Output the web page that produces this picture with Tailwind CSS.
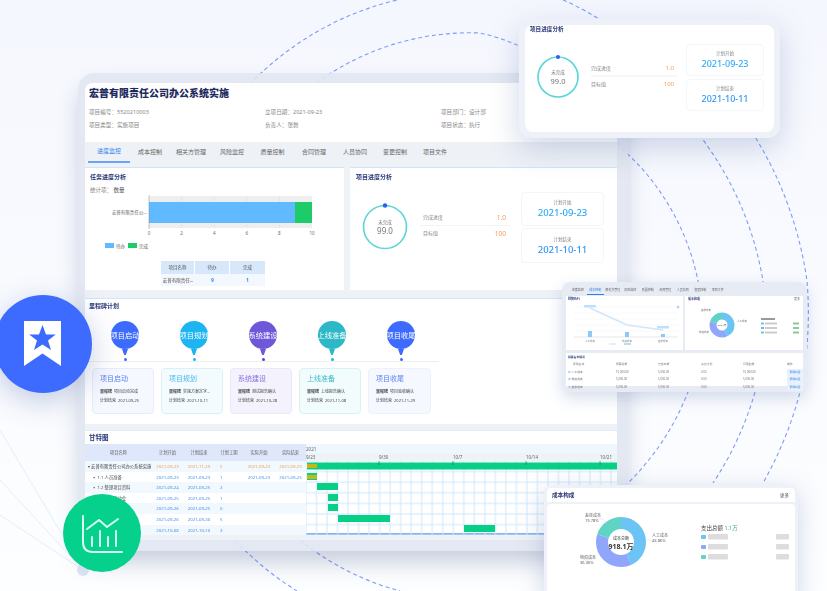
<!DOCTYPE html>
<html lang="zh-CN">
<head>
    <meta charset="UTF-8">
    <title>项目管理</title>
    <script src="https://cdn.jsdelivr.net/npm/@tailwindcss/browser@4"></script>
</head>
<body class="bg-white">
<div class="relative w-[827px] h-[591px] overflow-hidden bg-linear-to-b from-[#f5f7fe] to-[#fdfeff] font-['Noto_Sans','Noto_Sans_CJK_SC',sans-serif]">

    <!-- background rings -->
    <svg class="absolute inset-0" width="827" height="591" fill="none">
        <g stroke="#7d9cf7" stroke-width="1.100" stroke-dasharray="4 3">
            <path d="M300 96A260 260 0 0 1 480 33A200 200 0 0 1 620 147A240 240 0 0 1 698 281A270 270 0 0 1 688 392A260 260 0 0 1 630 481A270 270 0 0 1 540 530"/>
            <path d="M300 540A270 270 0 0 0 400 591"/>
            <path d="M240 95A300 300 0 0 1 397 0"/>
            <path d="M563 0A260 260 0 0 1 697 132A328 328 0 0 1 763 281A328 328 0 0 1 755 392A328 328 0 0 1 713 483"/>
            <path d="M235 540A300 300 0 0 0 297 591"/>
            <path d="M752 132A375 375 0 0 1 807 281A375 375 0 0 1 800 392A375 375 0 0 1 763 483"/>
        </g>
        <g stroke="#e6ecfa" stroke-width="1">
            <line x1="83" y1="570" x2="0" y2="430"/>
            <line x1="83" y1="570" x2="0" y2="480"/>
            <line x1="83" y1="570" x2="0" y2="515"/>
        </g>
        <circle cx="83" cy="570" r="6" fill="#dbe4f8"/>
    </svg>

    <!-- main window -->
    <div class="absolute left-[78px] top-[73px] w-[550px] h-[478px] rounded-2xl bg-[#e1e6f1]/90 pl-[7px] pr-[11px] pt-[10px] shadow-[0_14px_24px_-4px_rgba(70,90,140,0.32)] blur-[0.5px]">
        <div class="flex flex-col h-[457px] bg-[#eef1f6] rounded-tl-lg">
            <!-- header -->
            <div class="h-[59px] bg-white rounded-tl-lg pl-[4px] pt-[2px]">
                <h1 class="text-[10px] leading-[16px] font-black text-[#1e2a5e]">宏普有限责任公司办公系统实施</h1>
                <div class="grid grid-cols-[176px_176px_176px] mt-[5px] text-[5.600px] leading-[13px] text-[#888]">
                    <span>项目编号：5520210003</span><span>立项日期：2021-09-23</span><span>项目部门：设计部</span>
                    <span>项目类型：实施项目</span><span>负责人：张舞</span><span>项目状态：执行</span>
                </div>
            </div>
            <!-- tabs -->
            <div class="h-[25px] flex pl-[3px] text-[6px] text-[#666]">
                <div class="w-[42px] h-[21px] flex items-center justify-center text-[#2f80ed] border-b-2 border-[#6ea4f5]">进度监控</div>
                <div class="w-[40px] h-[21px] flex items-center justify-center">成本控制</div>
                <div class="w-[42px] h-[21px] flex items-center justify-center">相关方管理</div>
                <div class="w-[40px] h-[21px] flex items-center justify-center">风险监控</div>
                <div class="w-[41px] h-[21px] flex items-center justify-center">质量控制</div>
                <div class="w-[42px] h-[21px] flex items-center justify-center">合同管理</div>
                <div class="w-[40px] h-[21px] flex items-center justify-center">人员协同</div>
                <div class="w-[40px] h-[21px] flex items-center justify-center">变更控制</div>
                <div class="w-[40px] h-[21px] flex items-center justify-center">项目文件</div>
            </div>
            <!-- analysis panels -->
            <div class="flex gap-[6px] h-[123px]">
                <div class="w-[259px] bg-white border-t border-[#cfe6f8] pl-[5px]">
                    <div class="text-[6px] leading-[9px] mt-[5px] font-bold text-[#2b3a7a]">任务进度分析</div>
                    <div class="text-[5.500px] leading-[8px] mt-[4px] text-[#888]">统计项： <span class="text-[#555]">数量</span></div>
                    <svg class="block" width="254" height="60" font-size="4.500" fill="#666">
                        <rect x="59" y="2" width="163" height="32" fill="#eeeeee"/>
                        <g stroke="#dddddd" stroke-width="0.500">
                            <line x1="91.600" y1="2" x2="91.600" y2="34"/><line x1="124.200" y1="2" x2="124.200" y2="34"/>
                            <line x1="156.800" y1="2" x2="156.800" y2="34"/><line x1="189.400" y1="2" x2="189.400" y2="34"/>
                        </g>
                        <rect x="59" y="8" width="146" height="21" fill="#61b9ff"/>
                        <rect x="205" y="8" width="17" height="21" fill="#1ecb69"/>
                        <line x1="59" y1="1" x2="59" y2="35" stroke="#888" stroke-width="0.500"/>
                        <text x="57" y="20" text-anchor="end">宏普有限责任公...</text>
                        <text x="59" y="41" text-anchor="middle">0</text><text x="91.600" y="41" text-anchor="middle">2</text>
                        <text x="124.200" y="41" text-anchor="middle">4</text><text x="156.800" y="41" text-anchor="middle">6</text>
                        <text x="189.400" y="41" text-anchor="middle">8</text><text x="222" y="41" text-anchor="middle">10</text>
                        <rect x="15" y="49" width="9" height="5" fill="#61b9ff"/><text x="26" y="53.500">待办</text>
                        <rect x="38" y="49" width="9" height="5" fill="#1ecb69"/><text x="49" y="53.500">完成</text>
                    </svg>
                    <div class="ml-[71px] mt-[7px] w-[104px] grid grid-cols-[34px_35px_35px] text-[4.500px] text-center leading-[12.500px]">
                        <span class="bg-[#d7e8fb] text-[#555] border-r border-white">项目名称</span>
                        <span class="bg-[#d7e8fb] text-[#555] border-r border-white">待办</span>
                        <span class="bg-[#d7e8fb] text-[#555]">完成</span>
                        <span class="bg-[#f2f8fe] text-[#555]">宏普有限责任...</span>
                        <span class="bg-[#f2f8fe] text-[#2f80ed] font-bold">9</span>
                        <span class="bg-[#f2f8fe] text-[#2f80ed] font-bold">1</span>
                    </div>
                </div>
                <div class="w-[267px] bg-white border-t border-[#cfe6f8] pl-[6px]">
                    <div class="text-[6px] leading-[9px] mt-[5px] font-bold text-[#2b3a7a]">项目进度分析</div>
                    <div class="flex mt-[10px]">
                        <div class="relative w-[50px] h-[50px] ml-[4px] mt-[10px]">
                            <svg width="50" height="50" fill="none" class="absolute inset-0">
                                <circle cx="25" cy="25" r="21.500" stroke="#5ad6d8" stroke-width="1.600"/>
                                <circle cx="25" cy="3.500" r="2.200" fill="#2f5cf0"/>
                            </svg>
                            <div class="absolute inset-0 flex flex-col items-center justify-center">
                                <span class="text-[4.500px] leading-[7px] text-[#777]">未完成</span>
                                <span class="text-[8px] leading-[10px] text-[#777]">99.0</span>
                            </div>
                        </div>
                        <div class="w-[92px] ml-[9px] mt-[18px] text-[5px] text-[#888]">
                            <div class="flex justify-between h-[16px] items-center border-b border-[#f3f4f6] pl-[4px] pr-[5px]"><span>完成进度</span><span class="text-[6.500px] text-[#f59a5a]">1.0</span></div>
                            <div class="flex justify-between h-[16px] items-center pl-[4px] pr-[5px]"><span>目标值</span><span class="text-[6.500px] text-[#f59a5a]">100</span></div>
                        </div>
                        <div class="ml-[10px] flex flex-col gap-[2px] w-[83px]">
                            <div class="h-[34px] rounded border border-[#f2f5fa] flex flex-col items-center justify-center"><span class="text-[4.500px] leading-[7px] text-[#888]">计划开始</span><span class="text-[9.500px] leading-[13px] font-medium text-[#2eaaf5]">2021-09-23</span></div>
                            <div class="h-[35px] rounded border border-[#f2f5fa] flex flex-col items-center justify-center"><span class="text-[4.500px] leading-[7px] text-[#888]">计划结束</span><span class="text-[9.500px] leading-[13px] font-medium text-[#2e97f5]">2021-10-11</span></div>
                        </div>
                    </div>
                </div>
            </div>
            <!-- milestones -->
            <div class="mt-[8px] h-[126px] bg-white border-t border-[#cfe6f8] pl-[4px]">
                <div class="text-[6px] leading-[9px] mt-[3px] font-bold text-[#2b3a7a]">里程碑计划</div>
                <div class="flex gap-[7px] pl-[5px] w-[350px] h-[47px] mt-[4px] border-b border-[#eeeeee]">
                    <div class="w-[62px] flex flex-col items-center pt-[6px]">
                        <div class="w-[28px] h-[28px] rounded-full bg-[#3d6bff] flex items-center justify-center whitespace-nowrap text-[7.300px] text-white">项目启动</div>
                        <svg width="6" height="6" class="block"><path d="M0 0H6L3.800 6H2.200Z" fill="#3d6bff"/></svg>
                        <div class="w-[3px] h-[3px] mt-[3px] rounded-full bg-[#3d6bff]"></div>
                    </div>
                    <div class="w-[62px] flex flex-col items-center pt-[6px]">
                        <div class="w-[28px] h-[28px] rounded-full bg-[#1db4f2] flex items-center justify-center whitespace-nowrap text-[7.300px] text-white">项目规划</div>
                        <svg width="6" height="6" class="block"><path d="M0 0H6L3.800 6H2.200Z" fill="#1db4f2"/></svg>
                        <div class="w-[3px] h-[3px] mt-[3px] rounded-full bg-[#1db4f2]"></div>
                    </div>
                    <div class="w-[62px] flex flex-col items-center pt-[6px]">
                        <div class="w-[28px] h-[28px] rounded-full bg-[#6f57d9] flex items-center justify-center whitespace-nowrap text-[7.300px] text-white">系统建设</div>
                        <svg width="6" height="6" class="block"><path d="M0 0H6L3.800 6H2.200Z" fill="#6f57d9"/></svg>
                        <div class="w-[3px] h-[3px] mt-[3px] rounded-full bg-[#5a3fd6]"></div>
                    </div>
                    <div class="w-[62px] flex flex-col items-center pt-[6px]">
                        <div class="w-[28px] h-[28px] rounded-full bg-[#2cb8c6] flex items-center justify-center whitespace-nowrap text-[7.300px] text-white">上线准备</div>
                        <svg width="6" height="6" class="block"><path d="M0 0H6L3.800 6H2.200Z" fill="#2cb8c6"/></svg>
                        <div class="w-[3px] h-[3px] mt-[3px] rounded-full bg-[#12bcd0]"></div>
                    </div>
                    <div class="w-[62px] flex flex-col items-center pt-[6px]">
                        <div class="w-[28px] h-[28px] rounded-full bg-[#3d6bff] flex items-center justify-center whitespace-nowrap text-[7.300px] text-white">项目收尾</div>
                        <svg width="6" height="6" class="block"><path d="M0 0H6L3.800 6H2.200Z" fill="#3d6bff"/></svg>
                        <div class="w-[3px] h-[3px] mt-[3px] rounded-full bg-[#3d6bff]"></div>
                    </div>
                </div>
                <div class="flex gap-[7px] pl-[3px] mt-[6px]">
                    <div class="w-[62px] h-[46px] rounded-[4px] bg-[#f6f8ff] border border-[#e6ecfb] pl-[7px] pt-[4px]">
                        <div class="text-[7px] leading-[11px] text-[#5b82f5]">项目启动</div>
                        <div class="text-[4px] leading-[9px] mt-[3px] text-[#444] whitespace-nowrap"><b>里程碑</b>&nbsp; 项目启动完成</div>
                        <div class="text-[4px] leading-[9px] text-[#444] whitespace-nowrap">计划结束&nbsp; 2021-09-25</div>
                    </div>
                    <div class="w-[62px] h-[46px] rounded-[4px] bg-[#f3fbff] border border-[#d8f0f6] pl-[7px] pt-[4px]">
                        <div class="text-[7px] leading-[11px] text-[#45b8f0]">项目规划</div>
                        <div class="text-[4px] leading-[9px] mt-[3px] text-[#444] whitespace-nowrap"><b>里程碑</b>&nbsp; 实施方案定字...</div>
                        <div class="text-[4px] leading-[9px] text-[#444] whitespace-nowrap">计划结束&nbsp; 2021-10-11</div>
                    </div>
                    <div class="w-[62px] h-[46px] rounded-[4px] bg-[#f4f2fc] border border-[#ebe8f8] pl-[7px] pt-[4px]">
                        <div class="text-[7px] leading-[11px] text-[#8a70e0]">系统建设</div>
                        <div class="text-[4px] leading-[9px] mt-[3px] text-[#444] whitespace-nowrap"><b>里程碑</b>&nbsp; 测试报告确认</div>
                        <div class="text-[4px] leading-[9px] text-[#444] whitespace-nowrap">计划结束&nbsp; 2021-10-28</div>
                    </div>
                    <div class="w-[62px] h-[46px] rounded-[4px] bg-[#f3fcfd] border border-[#d8f2f2] pl-[7px] pt-[4px]">
                        <div class="text-[7px] leading-[11px] text-[#37bcc8]">上线准备</div>
                        <div class="text-[4px] leading-[9px] mt-[3px] text-[#444] whitespace-nowrap"><b>里程碑</b>&nbsp; 上线报告确认</div>
                        <div class="text-[4px] leading-[9px] text-[#444] whitespace-nowrap">计划结束&nbsp; 2021-11-08</div>
                    </div>
                    <div class="w-[63px] h-[46px] rounded-[4px] bg-[#f6f8ff] border border-[#eef1fb] pl-[7px] pt-[4px]">
                        <div class="text-[7px] leading-[11px] text-[#5b82f5]">项目收尾</div>
                        <div class="text-[4px] leading-[9px] mt-[3px] text-[#444] whitespace-nowrap"><b>里程碑</b>&nbsp; 项目验收确认</div>
                        <div class="text-[4px] leading-[9px] text-[#444] whitespace-nowrap">计划结束&nbsp; 2021-11-29</div>
                    </div>
                </div>
            </div>
            <!-- gantt -->
            <div class="mt-[6px] h-[105px] bg-white border-t border-[#dcecf9] border-b-2 border-b-[#7fb6f2]">
                <div class="text-[6.500px] leading-[13px] pl-[4px] font-bold text-[#2b3a7a]">甘特图</div>
                <div class="flex">
                    <div class="w-[221px] text-[4.300px]">
                        <div class="grid grid-cols-[67px_31px_32px_28px_32px_31px] h-[17px] bg-[#dfe8fa] text-[#666] text-center leading-[17px]">
                            <span>项目名称</span><span>计划开始</span><span>计划结束</span><span>计划工期</span><span>实际开始</span><span>实际结束</span>
                        </div>
                        <div class="grid grid-cols-[67px_31px_32px_28px_32px_31px] h-[10.600px] leading-[10.600px] bg-[#f1f8fe] text-[#f0a060] text-center">
                            <span class="text-left pl-[3px] text-[#444] whitespace-nowrap">▾ 宏普有限责任公司办公系统实施</span><span>2021-09-23</span><span>2021-11-29</span><span class="text-left pl-[5px]">5</span><span>2021-09-23</span><span>2021-09-23</span>
                        </div>
                        <div class="grid grid-cols-[67px_31px_32px_28px_32px_31px] h-[10.600px] leading-[10.600px] text-[#4a90e2] text-center">
                            <span class="text-left pl-[7px] text-[#555] whitespace-nowrap">▪ 1.1 人员准备</span><span>2021-09-23</span><span>2021-09-23</span><span class="text-left pl-[5px]">1</span><span>2021-09-23</span><span>2021-09-23</span>
                        </div>
                        <div class="grid grid-cols-[67px_31px_32px_28px_32px_31px] h-[10.600px] leading-[10.600px] bg-[#f1f8fe] text-[#4a90e2] text-center">
                            <span class="text-left pl-[7px] text-[#555] whitespace-nowrap">▪ 1.2 整理项目资料</span><span>2021-09-24</span><span>2021-09-25</span><span class="text-left pl-[5px]">2</span><span></span><span></span>
                        </div>
                        <div class="grid grid-cols-[67px_31px_32px_28px_32px_31px] h-[10.600px] leading-[10.600px] text-[#4a90e2] text-center">
                            <span class="text-left pl-[7px] text-[#555] whitespace-nowrap">▪ 1.3 项目启动会</span><span>2021-09-25</span><span>2021-09-25</span><span class="text-left pl-[5px]">1</span><span></span><span></span>
                        </div>
                        <div class="grid grid-cols-[67px_31px_32px_28px_32px_31px] h-[10.600px] leading-[10.600px] bg-[#f1f8fe] text-[#4a90e2] text-center">
                            <span class="text-left pl-[7px] text-[#555] whitespace-nowrap">▪ 1.4 项目启动</span><span>2021-09-26</span><span>2021-09-25</span><span class="text-left pl-[5px]">0</span><span></span><span></span>
                        </div>
                        <div class="grid grid-cols-[67px_31px_32px_28px_32px_31px] h-[10.600px] leading-[10.600px] text-[#4a90e2] text-center">
                            <span class="text-left pl-[7px] text-[#555] whitespace-nowrap">▪ 2.1 需求调研</span><span>2021-09-26</span><span>2021-09-30</span><span class="text-left pl-[5px]">5</span><span></span><span></span>
                        </div>
                        <div class="grid grid-cols-[67px_31px_32px_28px_32px_31px] h-[10.600px] leading-[10.600px] bg-[#f1f8fe] text-[#4a90e2] text-center">
                            <span class="text-left pl-[7px] text-[#555] whitespace-nowrap">▪ 2.2 方案编写</span><span>2021-10-08</span><span>2021-10-10</span><span class="text-left pl-[5px]">3</span><span></span><span></span>
                        </div>
                    </div>
                    <svg class="block" width="311" height="91" font-size="4.500" fill="#666">
                        <defs>
                            <pattern id="cells" width="10.520" height="10.600" patternUnits="userSpaceOnUse" y="17">
                                <rect width="10.520" height="10.600" fill="none" stroke="#cfe8fb" stroke-width="1"/>
                            </pattern>
                        </defs>
                        <rect width="311" height="8.500" fill="#eef7fd"/>
                        <rect y="8.500" width="311" height="8.500" fill="#eef3f7"/>
                        <text x="0" y="6.500">2021</text>
                        <text x="0" y="15">9/23</text><text x="73" y="15">9/30</text><text x="147" y="15">10/7</text><text x="220" y="15">10/14</text><text x="294" y="15">10/21</text>
                        <rect y="17" width="311" height="74" fill="url(#cells)"/>
                        <rect x="1" y="18.500" width="310" height="7" fill="#07cf86"/>
                        <g stroke="#444" stroke-width="0.500"><line x1="73" y1="17" x2="73" y2="21"/><line x1="147" y1="17" x2="147" y2="21"/><line x1="220" y1="17" x2="220" y2="21"/><line x1="294" y1="17" x2="294" y2="21"/></g>
                        <rect x="1" y="20" width="10" height="4" fill="#c2b818"/>
                        <rect x="1" y="29" width="10" height="7" fill="#07cf86"/>
                        <rect x="1" y="31" width="10" height="4" fill="#c2b818"/>
                        <rect x="11" y="39" width="21" height="7" fill="#07cf86"/>
                        <rect x="22" y="50" width="10" height="7" fill="#07cf86"/>
                        <rect x="22" y="60" width="10" height="7" fill="#07cf86"/>
                        <rect x="32" y="71" width="52" height="7" fill="#07cf86"/>
                        <rect x="158" y="81" width="31" height="7" fill="#07cf86"/>
                    </svg>
                </div>
            </div>
        </div>
    </div>

    <!-- floating window: progress analysis -->
    <div class="absolute left-[519px] top-[19px] w-[261px] h-[119px] rounded-xl bg-[#eef1f7] p-[6px] shadow-[0_10px_30px_rgba(70,100,160,0.25)] blur-[0.4px]">
        <div class="h-full rounded-lg bg-white pl-[5px]">
            <div class="text-[5.600px] leading-[9px] font-bold text-[#2b3a7a]">项目进度分析</div>
            <div class="flex">
                <div class="relative w-[46px] h-[46px] ml-[5px] mt-[20px]">
                    <svg width="46" height="46" fill="none" class="absolute inset-0">
                        <circle cx="23" cy="23" r="20" stroke="#5ad6d8" stroke-width="1.600"/>
                        <circle cx="23" cy="3" r="2" fill="#2f5cf0"/>
                    </svg>
                    <div class="absolute inset-0 flex flex-col items-center justify-center">
                        <span class="text-[4.500px] leading-[7px] text-[#777]">未完成</span>
                        <span class="text-[7.500px] leading-[10px] text-[#777]">99.0</span>
                    </div>
                </div>
                <div class="w-[86px] ml-[10px] mt-[28px] text-[5px] text-[#888]">
                    <div class="flex justify-between h-[15px] items-center border-b-2 border-[#f6f7f9] pr-[3px]"><span>完成进度</span><span class="text-[6px] text-[#f59a5a]">1.0</span></div>
                    <div class="flex justify-between h-[15px] items-center pr-[3px]"><span>目标值</span><span class="text-[6px] text-[#f59a5a]">100</span></div>
                </div>
                <div class="ml-[9px] mt-[10px] flex flex-col gap-[3px] w-[78px]">
                    <div class="h-[32px] rounded border border-[#f4f6fa] flex flex-col items-center justify-center"><span class="text-[4.500px] leading-[7px] text-[#888]">计划开始</span><span class="text-[9px] leading-[13px] font-medium text-[#2eaaf5]">2021-09-23</span></div>
                    <div class="h-[32px] rounded border border-[#f4f6fa] flex flex-col items-center justify-center"><span class="text-[4.500px] leading-[7px] text-[#888]">计划结束</span><span class="text-[9px] leading-[13px] font-medium text-[#2e97f5]">2021-10-11</span></div>
                </div>
            </div>
        </div>
    </div>

    <!-- floating window: cost monitor -->
    <div class="absolute left-[562px] top-[282px] w-[245px] h-[110px] rounded-lg bg-[#e6ebf4] pl-[4px] pr-[4px] pt-[3px] shadow-[0_6px_16px_rgba(70,100,160,0.22)] blur-[0.6px]">
        <div class="flex h-[10px] pl-[3px] text-[3px] leading-[10px] text-[#666]">
            <span class="w-[17.500px] text-center">进度监控</span><span class="w-[17.500px] text-center text-[#2f80ed] border-b border-[#2f80ed]">成本控制</span><span class="w-[17.500px] text-center">相关方管理</span><span class="w-[17.500px] text-center">风险监控</span><span class="w-[17.500px] text-center">质量控制</span><span class="w-[17.500px] text-center">合同管理</span><span class="w-[17.500px] text-center">人员协同</span><span class="w-[17.500px] text-center">变更控制</span><span class="w-[17.500px] text-center">项目文件</span>
        </div>
        <div class="flex gap-[2px] mt-[1px] h-[54px]">
            <div class="w-[117px] bg-white text-[3px] text-[#444]">
                <div class="pl-[2px] leading-[6px] font-bold text-[#2b3a7a]">预算执行</div>
                <svg class="block" width="117" height="48" fill="none" font-size="2.500">
                    <g stroke="#f0f2f6" stroke-width="0.500"><line x1="8" y1="5" x2="112" y2="5"/><line x1="8" y1="11" x2="112" y2="11"/><line x1="8" y1="17" x2="112" y2="17"/><line x1="8" y1="23" x2="112" y2="23"/><line x1="8" y1="29" x2="112" y2="29"/></g>
                    <line x1="8" y1="35" x2="112" y2="35" stroke="#ccc" stroke-width="0.500"/>
                    <polyline points="24,6 61,23 97,28" stroke="#cfe7fb" stroke-width="1.400"/>
                    <rect x="22" y="29" width="4" height="6" fill="#8cc8f8"/><rect x="59" y="30" width="4" height="5" fill="#8cc8f8"/><rect x="95" y="32" width="4" height="3" fill="#8cc8f8"/>
                    <rect x="18" y="3" width="12" height="2.500" fill="#bfe0fa"/><rect x="91" y="24" width="12" height="2.500" fill="#bfe0fa"/>
                    <rect x="43" y="41" width="7" height="2" fill="#e4f1fc"/><rect x="58" y="41" width="7" height="2" fill="#b9dcf8"/>
                    <circle cx="112" cy="5" r="1.500" fill="#bcd3f8"/>
                    <text x="19" y="40" fill="#888">人工成本</text><text x="56" y="40" fill="#888">物资成本</text><text x="92" y="40" fill="#888">差旅成本</text>
                </svg>
            </div>
            <div class="w-[118px] bg-white text-[3px] text-[#444]">
                <div class="pl-[3px] pr-[3px] flex justify-between leading-[6px] font-bold text-[#2b3a7a]"><span>成本构成</span><span class="font-normal text-[#666]">更多</span></div>
                <svg class="block" width="118" height="48" fill="none" font-size="2.500" stroke-linecap="butt">
                    <g transform="rotate(-90 37 23)" stroke-width="7">
                        <circle cx="37" cy="23" r="9" stroke="#6cc4f5" pathLength="100" stroke-dasharray="43 57"/>
                        <circle cx="37" cy="23" r="9" stroke="#8fa6fb" pathLength="100" stroke-dasharray="37 63" stroke-dashoffset="-43"/>
                        <circle cx="37" cy="23" r="9" stroke="#5fd3c4" pathLength="100" stroke-dasharray="20 80" stroke-dashoffset="-80"/>
                    </g>
                    <text x="37" y="24" text-anchor="middle" fill="#333">918.1万</text>
                    <g fill="#777"><text x="52" y="20">人工成本</text><text x="16" y="9">差旅成本</text><text x="14" y="31">物资成本</text></g>
                    <rect x="76" y="16" width="14" height="2" fill="#999"/>
                    <rect x="76" y="20.500" width="3" height="2" fill="#6cc4f5"/><rect x="80" y="20.500" width="12" height="2" fill="#ccc"/><rect x="108" y="20.500" width="6" height="2" fill="#8dc99a"/>
                    <rect x="76" y="25" width="3" height="2" fill="#8fa6fb"/><rect x="80" y="25" width="12" height="2" fill="#ccc"/><rect x="108" y="25" width="6" height="2" fill="#8dc99a"/>
                    <rect x="76" y="29.500" width="3" height="2" fill="#5fd3c4"/><rect x="80" y="29.500" width="12" height="2" fill="#ccc"/><rect x="108" y="29.500" width="6" height="2" fill="#8dc99a"/>
                </svg>
            </div>
        </div>
        <div class="mt-[3px] h-[33px] bg-white text-[2.800px] text-[#777] pl-[2px]">
            <div class="leading-[8px] font-bold text-[#2b3a7a]">预算支出情况</div>
            <div class="grid grid-cols-[48px_42px_43px_42px_44px_16px] leading-[7.500px]">
                <span class="pl-[5px]">费用名称</span><span>预算总额</span><span>已支出额</span><span>占比比例</span><span>可用金额</span><span>操作</span>
                <span><span class="text-[#bcd3f8]">●</span> 人工成本</span><span>10,000.00</span><span>5,000.00</span><span>0.00</span><span>10,000.00</span><span class="bg-[#e9f1fd] text-[#2f80ed] text-center">费用科目</span>
                <span><span class="text-[#bcd3f8]">●</span> 物资成本</span><span>5,000.00</span><span>5,000.00</span><span>0.00</span><span>5,000.00</span><span class="bg-[#e9f1fd] text-[#2f80ed] text-center">费用科目</span>
                <span><span class="text-[#bcd3f8]">●</span> 差旅成本</span><span>5,000.00</span><span>5,000.00</span><span>0.00</span><span>5,000.00</span><span class="bg-[#e9f1fd] text-[#2f80ed] text-center">费用科目</span>
            </div>
        </div>
    </div>

    <!-- floating window: cost structure -->
    <div class="absolute left-[544px] top-[485px] w-[254px] h-[120px] rounded-lg bg-[#eef1f7] p-[3px] shadow-[0_6px_24px_rgba(70,100,160,0.25)] blur-[0.4px]">
        <div class="h-[14px] rounded-t bg-white flex items-center justify-between pl-[5px] pr-[6px] text-[#2b3a7a]">
            <span class="text-[5.600px] font-bold">成本构成</span><span class="text-[4.500px] text-[#555]">更多</span>
        </div>
        <div class="mt-[2px] h-[100px] rounded-t bg-white">
            <svg class="block" width="248" height="100" fill="none" font-size="4">
                <g transform="rotate(-90 74 38)" stroke-width="12">
                    <circle cx="74" cy="38" r="19" stroke="#6cc4f5" pathLength="100" stroke-dasharray="43 57"/>
                    <circle cx="74" cy="38" r="19" stroke="#8fa6fb" pathLength="100" stroke-dasharray="37 63" stroke-dashoffset="-43"/>
                    <circle cx="74" cy="38" r="19" stroke="#5fd3c4" pathLength="100" stroke-dasharray="20 80" stroke-dashoffset="-80"/>
                </g>
                <text x="74" y="36" text-anchor="middle" fill="#444">成本总额</text>
                <text x="74" y="45" text-anchor="middle" fill="#333" font-size="7" font-weight="700">918.1万</text>
                <path d="M99 36H105M46 52L42 56H36M60 19L56 15H50" stroke="#cfe4f5" stroke-width="0.600"/>
                <g fill="#666">
                    <text x="105" y="33">人工成本</text><text x="105" y="38">43.86%</text>
                    <text x="33" y="55">物资成本</text><text x="33" y="60">36.36%</text>
                    <text x="38" y="13">差旅成本</text><text x="38" y="18">19.78%</text>
                </g>
                <text x="154" y="26" font-size="5.500" fill="#444">支出总额 <tspan fill="#37b26c">1.1万</tspan></text>
                <rect x="154" y="31" width="5" height="4" rx="1" fill="#6cc4f5"/><rect x="161" y="30" width="20" height="5.500" rx="1" fill="#dddddd"/><rect x="229" y="30" width="13" height="5.500" rx="1" fill="#dddddd"/>
                <rect x="154" y="41" width="5" height="4" rx="1" fill="#8fa6fb"/><rect x="161" y="40" width="20" height="5.500" rx="1" fill="#dddddd"/><rect x="229" y="40" width="13" height="5.500" rx="1" fill="#dddddd"/>
                <rect x="154" y="51" width="5" height="4" rx="1" fill="#5fd3c4"/><rect x="161" y="50" width="20" height="5.500" rx="1" fill="#dddddd"/><rect x="229" y="50" width="13" height="5.500" rx="1" fill="#dddddd"/>
            </svg>
        </div>
    </div>

    <!-- badges -->
    <div class="absolute left-[-6px] top-[295px] w-[98px] h-[98px] rounded-full bg-[#3d6bff] flex items-center justify-center shadow-[0_8px_30px_rgba(60,90,160,0.3)]">
        <svg width="38" height="46" viewBox="0 0 38 46" class="mr-[1px]">
            <path fill="#ffffff" d="M0 0H37V45L18.500 32.500L0 45Z"/>
            <path fill="#3d6bff" d="M18.500 4L22 13.500H31.800L24 19.500L27 29L18.500 23.500L10 29L13 19.500L5.200 13.500H15Z"/>
        </svg>
    </div>
    <div class="absolute left-[63px] top-[494px] w-[78px] h-[78px] rounded-full bg-[#06d18c] flex items-center justify-center">
        <svg width="78" height="78" fill="none" stroke="#d9fff0" stroke-width="2" stroke-linecap="round" stroke-linejoin="round">
            <path d="M20 22V48Q20 58 30 58H59"/>
            <path d="M24 35L36 26L44 33L55 25"/>
            <path d="M29 43V52M37 37V52M45 43V52M53 37V52"/>
        </svg>
    </div>
</div>
</body>
</html>
